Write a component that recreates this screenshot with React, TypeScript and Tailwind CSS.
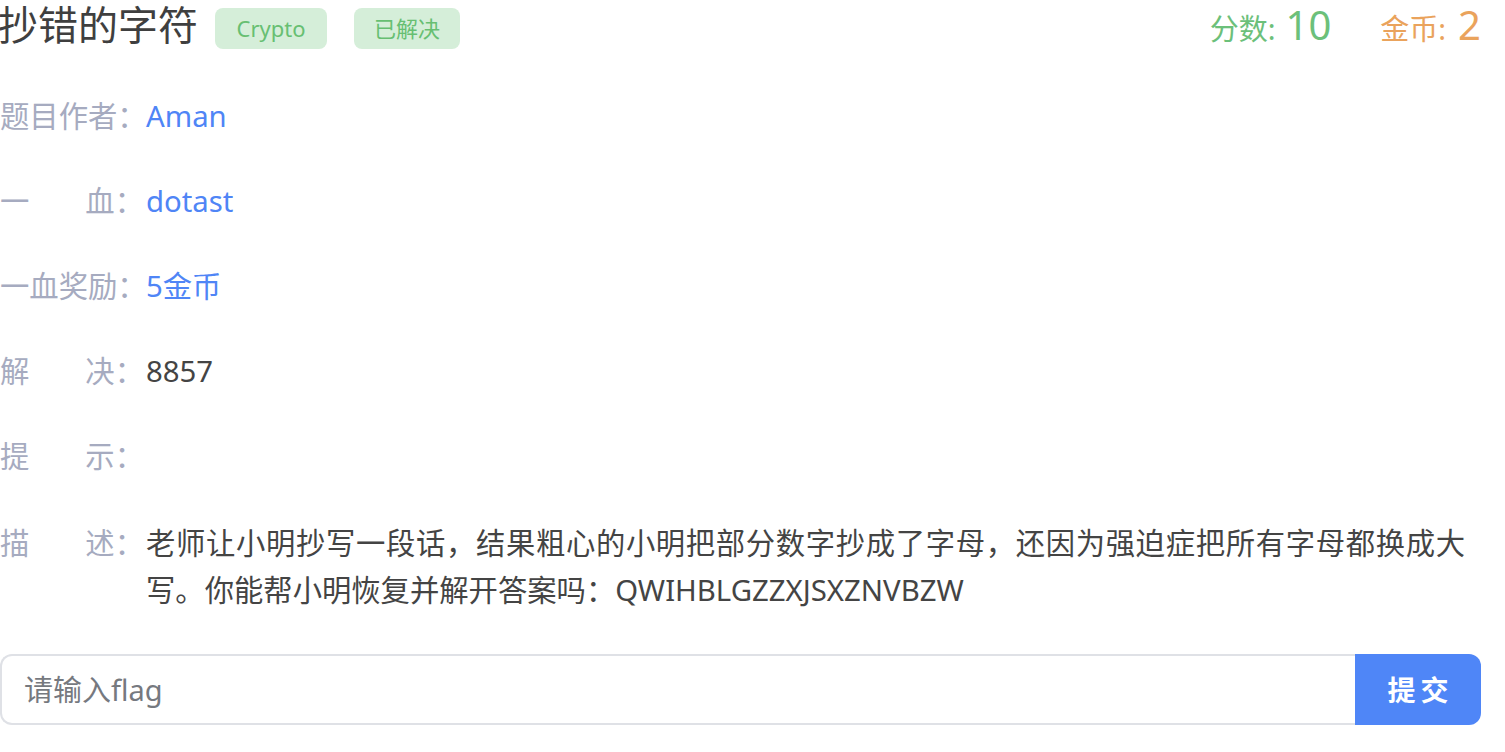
import React from "react";

const font = { fontFamily: '"Noto Sans", "Noto Sans CJK SC", sans-serif' };

function Row({ label, children, top = false, last = false }: { label: React.ReactNode; children: React.ReactNode; top?: boolean; last?: boolean }) {
  return (
    <div className={`flex ${top ? "items-start" : "items-center"} ${last ? "mb-[40px]" : "mb-[42px]"}`}>
      <div className={`w-[146px] shrink-0 whitespace-nowrap text-[#a6abc0] ${top ? "leading-[47px]" : ""}`}>{label}</div>
      <div className="flex-1">{children}</div>
    </div>
  );
}

function Split({ a, b }: { a: string; b: string }) {
  return (
    <div className="flex justify-between w-[145px] pr-[1px]">
      <span>{a}</span>
      <span>{b}</span>
    </div>
  );
}

export default function App() {
  return (
    <div className="w-[1505px] h-[752px] bg-white overflow-hidden" style={font}>
      <div className="w-[1481px]">
        <div className="flex items-center justify-between h-[50px]">
          <div className="flex items-center">
            <div className="text-[40px] leading-[50px] text-[#3f3f3f] -ml-[2px] whitespace-nowrap">抄错的字符</div>
            <div className="ml-[17px] mt-[6px] w-[112px] h-[41px] rounded-[8px] bg-[#d5eed9] text-[#67bf72] text-[22px] flex items-center justify-center">Crypto</div>
            <div className="ml-[27px] mt-[6px] w-[106px] h-[41px] rounded-[8px] bg-[#d5eed9] text-[#67bf72] text-[22px] flex items-center justify-center">已解决</div>
          </div>
          <div className="flex items-baseline whitespace-nowrap">
            <span className="text-[#6cc07a] text-[29px]">分数:</span>
            <span className="text-[#6cc07a] text-[40px] ml-[10px]">10</span>
            <span className="text-[#eaa35c] text-[29px] ml-[49px]">金币:</span>
            <span className="text-[#eaa35c] text-[40px] ml-[12px]">2</span>
          </div>
        </div>

        <div className="mt-[45px] text-[29.33px] leading-[43px]">
          <Row label="题目作者：">
            <span className="text-[#4f85f6]">Aman</span>
          </Row>
          <Row label={<Split a="一" b="血：" />}>
            <span className="text-[#4f85f6]">dotast</span>
          </Row>
          <Row label="一血奖励：">
            <span className="text-[#4f85f6]">5金币</span>
          </Row>
          <Row label={<Split a="解" b="决：" />}>
            <span className="text-[#444444]">8857</span>
          </Row>
          <Row label={<Split a="提" b="示：" />}>
            <span>&nbsp;</span>
          </Row>
          <Row label={<Split a="描" b="述：" />} top last>
            <p className="text-[#444444] w-[1319px] text-justify leading-[47px]">
              老师让小明抄写一段话，结果粗心的小明把部分数字抄成了字母，还因为强迫症把所有字母都换成大写。你能帮小明恢复并解开答案吗：QWIHBLGZZXJSXZNVBZW
            </p>
          </Row>
        </div>

        <div className="flex h-[71px]">
          <input
            className="flex-1 h-full border-2 border-r-0 border-[#dfe1e6] rounded-l-[12px] pl-[22px] text-[29px] outline-none placeholder:text-[#76797f]"
            style={font}
            placeholder="请输入flag"
          />
          <button className="w-[126px] h-full bg-[#4f86f7] rounded-r-[12px] text-white text-[28px] font-bold tracking-[5px] pl-[5px]" style={font}>
            提交
          </button>
        </div>
      </div>
    </div>
  );
}
